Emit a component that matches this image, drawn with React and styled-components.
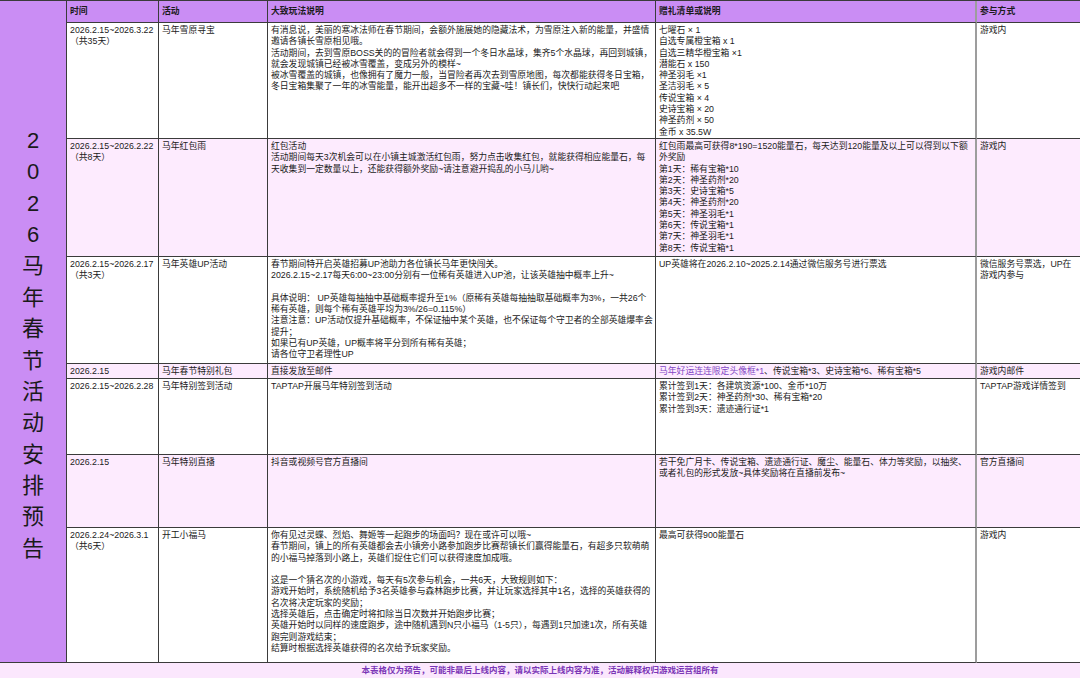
import React from 'react';
import styled, { createGlobalStyle } from 'styled-components';

const GlobalStyle = createGlobalStyle`
  html, body { margin: 0; padding: 0; background: #ffffff; }
  body { font-family: "Liberation Sans", "Noto Sans CJK SC", sans-serif; color: #1b1b1b; }
  * { box-sizing: border-box; }
`;

const PURPLE = '#ca8df4';
const PINK = '#fdebfe';
const LINE = '#3b3b3b';

const Sheet = styled.div`
  display: grid;
  grid-template-columns: 67px 92px 109px 388px 321px 1fr;
  grid-template-rows: 22px 116px 118px 107px 15px 76px 73px 135px 16px;
  width: 1080px;
  height: 678px;
  border-top: 1px solid ${LINE};
`;

const TitleColumn = styled.div`
  grid-row: 1 / 9;
  grid-column: 1;
  background: ${PURPLE};
  border-right: 1px solid ${LINE};
  border-bottom: 1px solid ${LINE};
  display: flex;
  flex-direction: column;
  align-items: center;
  justify-content: center;
  padding-top: 26px;
`;

const Glyph = styled.span`
  display: block;
  height: 31.4px;
  line-height: 31.4px;
  font-size: 22px;
  color: #1a1a1a;
  font-family: "Liberation Sans", "Noto Sans CJK SC", sans-serif;
`;

const Cell = styled.div`
  background: ${p => (p.$head ? PURPLE : p.$pink ? PINK : '#ffffff')};
  border-bottom: 1px solid ${LINE};
  border-right: ${p => (p.$divider ? '2px solid #9d9d9d' : p.$end ? 'none' : `1px solid ${LINE}`)};
  padding: ${p => (p.$head ? '5px 1px 0 3px' : '2px 2px 0 3px')};
  font-size: 8.8px;
  line-height: 11.3px;
  font-weight: ${p => (p.$head ? 700 : 400)};
  white-space: pre-line;
  overflow: hidden;
`;

const Highlight = styled.span`
  color: #8246c4;
`;

const Footer = styled.div`
  grid-column: 1 / -1;
  background: #fbe7fd;
  border-bottom: 1px solid ${LINE};
  color: #7a36b6;
  font-size: 8.5px;
  font-weight: 700;
  text-align: center;
  line-height: 14px;
`;

const headers = ['时间', '活动', '大致玩法说明', '赠礼清单或说明', '参与方式'];

const rows = [
  {
    time: '2026.2.15~2026.3.22\n（共35天）',
    name: '马年雪原寻宝',
    desc: '有消息说，美丽的寒冰法师在春节期间，会额外施展她的隐藏法术，为雪原注入新的能量，并盛情邀请各镇长雪原相见哦。\n活动期间，去到雪原BOSS关的的冒险者就会得到一个冬日水晶球，集齐5个水晶球，再回到城镇，就会发现城镇已经被冰雪覆盖，变成另外的模样~\n被冰雪覆盖的城镇，也像拥有了魔力一般，当冒险者再次去到雪原地图，每次都能获得冬日宝箱，冬日宝箱集聚了一年的冰雪能量，能开出超多不一样的宝藏~哇！镇长们，快快行动起来吧',
    gift: '七曜石 × 1\n自选专属橙宝箱 x 1\n自选三精华橙宝箱 ×1\n潜能石 x 150\n神圣羽毛 ×1\n圣洁羽毛 × 5\n传说宝箱 × 4\n史诗宝箱 × 20\n神圣药剂 × 50\n金币 x 35.5W',
    way: '游戏内',
  },
  {
    pink: true,
    time: '2026.2.15~2026.2.22\n（共8天）',
    name: '马年红包雨',
    desc: '红包活动\n活动期间每天3次机会可以在小镇主城激活红包雨，努力点击收集红包，就能获得相应能量石，每天收集到一定数量以上，还能获得额外奖励~请注意避开捣乱的小马儿哟~',
    gift: '红包雨最高可获得8*190=1520能量石，每天达到120能量及以上可以得到以下额外奖励\n第1天：稀有宝箱*10\n第2天：神圣药剂*20\n第3天：史诗宝箱*5\n第4天：神圣药剂*20\n第5天：神圣羽毛*1\n第6天：传说宝箱*1\n第7天：神圣羽毛*1\n第8天：传说宝箱*1',
    way: '游戏内',
  },
  {
    time: '2026.2.15~2026.2.17\n（共3天）',
    name: '马年英雄UP活动',
    desc: '春节期间特开启英雄招募UP池助力各位镇长马年更快闯关。\n2026.2.15~2.17每天6:00~23:00分别有一位稀有英雄进入UP池，让该英雄抽中概率上升~\n\n具体说明： UP英雄每抽抽中基础概率提升至1%（原稀有英雄每抽抽取基础概率为3%，一共26个稀有英雄，则每个稀有英雄平均为3%/26=0.115%）\n注意注意：UP活动仅提升基础概率，不保证抽中某个英雄，也不保证每个守卫者的全部英雄爆率会提升；\n如果已有UP英雄，UP概率将平分到所有稀有英雄；\n请各位守卫者理性UP',
    gift: 'UP英雄将在2026.2.10~2025.2.14通过微信服务号进行票选',
    way: '微信服务号票选，UP在游戏内参与',
  },
  {
    pink: true,
    time: '2026.2.15',
    name: '马年春节特别礼包',
    desc: '直接发放至邮件',
    gift: (
      <>
        <Highlight>马年好运连连限定头像框*1</Highlight>、传说宝箱*3、史诗宝箱*6、稀有宝箱*5
      </>
    ),
    way: '游戏内邮件',
  },
  {
    time: '2026.2.15~2026.2.28',
    name: '马年特别签到活动',
    desc: 'TAPTAP开展马年特别签到活动',
    gift: '累计签到1天：各建筑资源*100、金币*10万\n累计签到2天：神圣药剂*30、稀有宝箱*20\n累计签到3天：遗迹通行证*1',
    way: 'TAPTAP游戏详情签到',
  },
  {
    pink: true,
    time: '2026.2.15',
    name: '马年特别直播',
    desc: '抖音或视频号官方直播间',
    gift: '若干免广月卡、传说宝箱、遗迹通行证、魔尘、能量石、体力等奖励，以抽奖、或者礼包的形式发放~具体奖励将在直播前发布~',
    way: '官方直播间',
  },
  {
    time: '2026.2.24~2026.3.1\n（共6天）',
    name: '开工小福马',
    desc: '你有见过灵蝶、烈焰、舞姬等一起跑步的场面吗？现在或许可以哦~\n春节期间，镇上的所有英雄都会去小镇旁小路参加跑步比赛帮镇长们赢得能量石，有超多只软萌萌的小福马掉落到小路上，英雄们捉住它们可以获得速度加成哦。\n\n这是一个猜名次的小游戏，每天有5次参与机会，一共6天，大致规则如下：\n游戏开始时，系统随机给予3名英雄参与森林跑步比赛，并让玩家选择其中1名，选择的英雄获得的名次将决定玩家的奖励；\n选择英雄后，点击确定时将扣除当日次数并开始跑步比赛；\n英雄开始时以同样的速度跑步，途中随机遇到N只小福马（1-5只），每遇到1只加速1次，所有英雄跑完则游戏结束；\n结算时根据选择英雄获得的名次给予玩家奖励。',
    gift: '最高可获得900能量石',
    way: '游戏内',
  },
];

const title = Array.from('2026马年春节活动安排预告');

export default function App() {
  return (
    <>
      <GlobalStyle />
      <Sheet>
        <TitleColumn>
          {title.map((ch, i) => (
            <Glyph key={i}>{ch}</Glyph>
          ))}
        </TitleColumn>
        {headers.map((h, i) => (
          <Cell key={h} $head $divider={i === 3} $end={i === 4}>
            {h}
          </Cell>
        ))}
        {rows.map((r, i) => (
          <React.Fragment key={i}>
            <Cell $pink={r.pink}>{r.time}</Cell>
            <Cell $pink={r.pink}>{r.name}</Cell>
            <Cell $pink={r.pink}>{r.desc}</Cell>
            <Cell $pink={r.pink} $divider>{r.gift}</Cell>
            <Cell $pink={r.pink} $end>{r.way}</Cell>
          </React.Fragment>
        ))}
        <Footer>本表格仅为预告，可能非最后上线内容，请以实际上线内容为准，活动解释权归游戏运营组所有</Footer>
      </Sheet>
    </>
  );
}
